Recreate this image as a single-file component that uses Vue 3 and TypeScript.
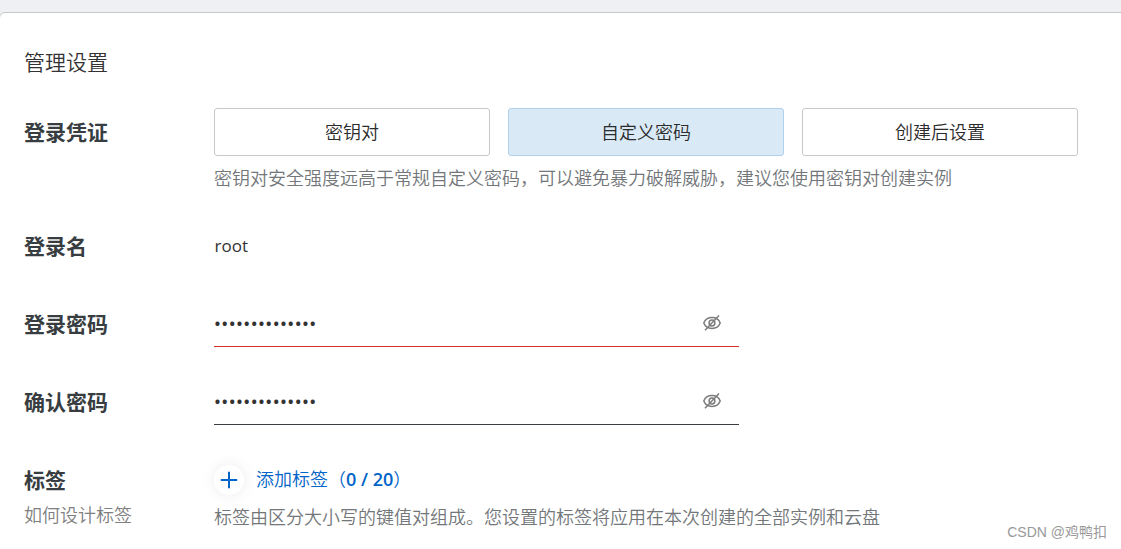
<script setup lang="ts">
import { ref } from 'vue'

interface Field {
  label: string
  length: number
  invalid: boolean
}

const options: string[] = ['密钥对', '自定义密码', '创建后设置']
const selected = ref(1)
const fields: Field[] = [
  { label: '登录密码', length: 14, invalid: true },
  { label: '确认密码', length: 14, invalid: false },
]
</script>

<template>
  <main class="page">
    <section class="panel">
      <h2 class="title">管理设置</h2>

      <div class="row credential">
        <div class="label">登录凭证</div>
        <div class="content">
          <div class="options">
            <button
              v-for="(option, i) in options"
              :key="option"
              type="button"
              class="option"
              :class="{ active: i === selected }"
              @click="selected = i"
            >{{ option }}</button>
          </div>
          <p class="hint">密钥对安全强度远高于常规自定义密码，可以避免暴力破解威胁，建议您使用密钥对创建实例</p>
        </div>
      </div>

      <div class="row">
        <div class="label">登录名</div>
        <div class="content name">root</div>
      </div>

      <div v-for="field in fields" :key="field.label" class="row">
        <div class="label">{{ field.label }}</div>
        <div class="field" :class="{ invalid: field.invalid }">
          <span class="dots">{{ '•'.repeat(field.length) }}</span>
          <svg class="eye" viewBox="0 0 20 20" width="20" height="20">
            <path d="M1.8 10C3.2 6.4 6.2 4.6 10 4.6s6.800 1.800 8.200 5.400c-1.400 3.600-4.400 5.400-8.200 5.400S3.200 13.600 1.800 10Z" />
            <circle cx="10" cy="10" r="2.900" />
            <path d="M3 17.200 17 2.600" />
          </svg>
        </div>
      </div>

      <div class="row tags">
        <div>
          <div class="label">标签</div>
          <div class="help">如何设计标签</div>
        </div>
        <div class="content">
          <div class="add">
            <span class="plus">
              <svg viewBox="0 0 18 18" width="18" height="18"><path d="M9 .8v16.400M.8 9h16.400" /></svg>
            </span>
            <span class="addText">添加标签（<b>0 / 20</b>）</span>
          </div>
          <p class="hint tagHint">标签由区分大小写的键值对组成。您设置的标签将应用在本次创建的全部实例和云盘</p>
        </div>
      </div>
    </section>
    <div class="watermark">CSDN @鸡鸭扣</div>
  </main>
</template>

<style>
html,
body {
  overflow: hidden;
}
</style>

<style scoped>
.page {
  box-sizing: border-box;
  position: relative;
  width: 1121px;
  height: 549px;
  padding-top: 12px;
  overflow: hidden;
  background: #eff0f4;
  color: #333;
  font: 18px/26px "Open Sans", "Noto Sans CJK SC", sans-serif;
}
.panel {
  box-sizing: border-box;
  width: 1140px;
  height: 560px;
  margin-left: -1px;
  padding: 33px 24px 0;
  border: 1px solid #c8c8c8;
  border-radius: 6px;
  background: #fff;
}
.title {
  margin: 0;
  height: 62px;
  font: 350 21px/30px "Noto Sans CJK SC", sans-serif;
}
.row {
  display: grid;
  grid-template-columns: 190px 1fr;
  height: 78px;
}
.credential {
  height: 114px;
}
.label {
  height: 48px;
  color: #373d41;
  font: bold 21px/46px "Noto Sans CJK SC", sans-serif;
}
.options {
  display: flex;
  gap: 18px;
}
.option {
  box-sizing: border-box;
  width: 276px;
  height: 48px;
  padding: 0 0 2px;
  border: 1px solid #c8c8c8;
  border-radius: 3px;
  background: #fff;
  color: #2b2b2b;
  font: 350 18px/44px "Noto Sans CJK SC", sans-serif;
}
.option.active {
  border-color: #b0d1ec;
  background: #d9eaf6;
}
.hint {
  margin: 8px 0 0;
  color: #73777a;
  font: 350 18px/27px "Noto Sans CJK SC", sans-serif;
  white-space: nowrap;
}
.name {
  padding-left: 0.5px;
  line-height: 47px;
  font-size: 17px;
}
.field {
  box-sizing: border-box;
  display: flex;
  align-items: center;
  justify-content: space-between;
  width: 525px;
  height: 47px;
  padding: 0 17px 0 0;
  border-bottom: 1px solid #373d41;
}
.field.invalid {
  border-bottom-color: #d93026;
}
.dots {
  font: 18.4px/46px "Noto Sans", sans-serif;
  letter-spacing: 0.42px;
}
.eye {
  fill: none;
  stroke: #7c7c7c;
  stroke-width: 1.5;
}
.tags .help {
  margin-top: -3px;
  color: #808080;
  font: 350 18px/27px "Noto Sans CJK SC", sans-serif;
}
.add {
  display: flex;
  align-items: center;
  gap: 12px;
  height: 48px;
  color: #0064c8;
}
.plus {
  display: flex;
  align-items: center;
  justify-content: center;
  width: 30px;
  height: 30px;
  border-radius: 50%;
  box-shadow: 0 0 15px rgba(0, 0, 0, 0.08);
}
.plus path {
  fill: none;
  stroke: #0064c8;
  stroke-width: 2;
}
.addText {
  margin-bottom: 3px;
  font: 350 18px/44px "Noto Sans CJK SC", sans-serif;
  white-space: nowrap;
}
.addText b {
  font-family: "Open Sans", sans-serif;
  font-weight: 600;
  font-size: 18px;
}
.tagHint {
  margin-top: -1px;
}
.watermark {
  position: absolute;
  right: 14px;
  bottom: 7px;
  color: #999;
  font: 14px/20px "Liberation Sans", "Noto Sans CJK SC", sans-serif;
}
</style>
